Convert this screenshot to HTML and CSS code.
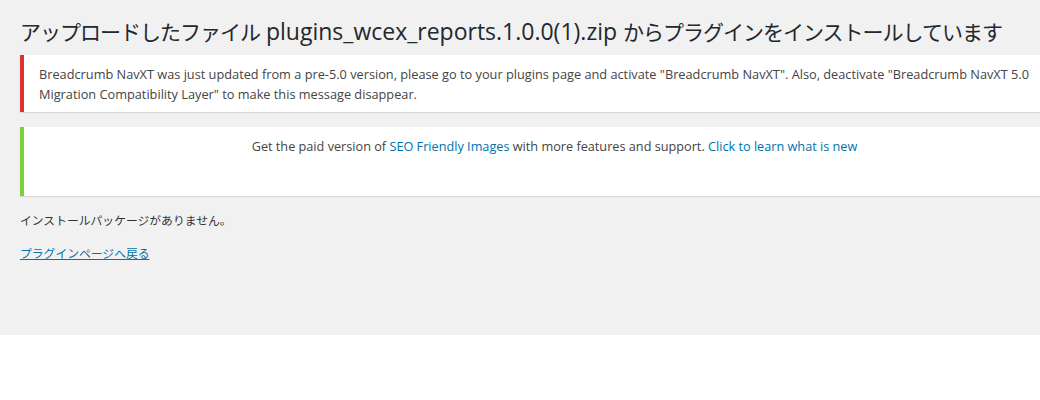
FILE: index.html
```html
<!DOCTYPE html>
<html lang="ja">
<head>
    <meta charset="UTF-8">
    <title>プラグインのインストール</title>
    <link rel="stylesheet" href="styles.css">
</head>
<body>
    <div id="wpbody">
        <div class="wrap">
            <h1><span class="ja">アップロードしたファイル</span> plugins_wcex_reports.1.0.0(1).zip <span class="ja">からプラグインをインストールしています</span></h1>

            <div class="notice notice-error">
                <p>Breadcrumb NavXT was just updated from a pre-5.0 version, please go to your plugins page and activate "Breadcrumb NavXT". Also, deactivate "Breadcrumb NavXT 5.0 Migration Compatibility Layer" to make this message disappear.</p>
            </div>

            <div class="notice notice-success centered">
                <p>Get the paid version of <a href="#">SEO Friendly Images</a> with more features and support. <a href="#">Click to learn what is new</a></p>
            </div>

            <p class="jp">インストールパッケージがありません。</p>
            <p class="jp"><a href="#" class="back">プラグインページへ戻る</a></p>
        </div>
    </div>
</body>
</html>
```

FILE: styles.css
```css
html, body {
    margin: 0;
    padding: 0;
    overflow-x: hidden;
    background: #fff;
}
body {
    font-family: "Open Sans", "Noto Sans CJK JP", sans-serif;
    font-size: 13px;
    line-height: 20px;
    color: #444;
}
#wpbody {
    background: #f1f1f1;
    height: 335px;
    padding: 0 0 0 20px;
}
.wrap {
    width: 1062px;
    padding-top: 13px;
}
h1 {
    font-size: 23px;
    font-weight: 400;
    line-height: 36px;
    color: #23282d;
    margin: 0 0 5px;
    white-space: nowrap;
    font-family: "Open Sans", "Noto Sans CJK JP", sans-serif;
}
h1 .ja {
    font-size: 21px;
    letter-spacing: -1px;
}
a {
    color: #0073aa;
    text-decoration: none;
}
.notice {
    background: #fff;
    border-left: 4px solid #fff;
    box-shadow: 0 1px 1px 0 rgba(0,0,0,0.1);
    padding: 9px 12px 8px 15px;
    margin-bottom: 15px;
}
.notice p {
    margin: 0;
}
.notice-error {
    border-left-color: #dc3232;
}
.notice-error p {
    font-size: 12.75px;
}
.notice-success {
    border-left-color: #7ad03a;
    padding-bottom: 40px;
    margin-bottom: 14px;
}
.notice-success p {
    font-size: 12.7px;
}
.centered {
    text-align: center;
}
.jp {
    margin: 0;
    font-family: "Noto Sans CJK JP", sans-serif;
    font-size: 11.8px;
    color: #333;
}
.jp + .jp {
    margin-top: 13px;
}
.back {
    text-decoration: underline;
}
```
